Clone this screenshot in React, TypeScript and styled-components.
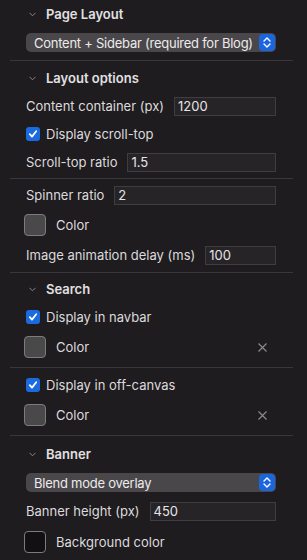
import React from 'react';
import styled, { createGlobalStyle } from 'styled-components';

const GlobalStyle = createGlobalStyle`
  html, body {
    margin: 0;
    padding: 0;
    background: #1f1c1f;
  }
  body {
    font-family: Inter, "Noto Sans", "Liberation Sans", sans-serif;
    font-size: 13px;
    color: #dcdadc;
    -webkit-font-smoothing: antialiased;
  }
`;

interface SectionProps {
  $top?: number;
  $bottom?: number;
  $gap?: number;
  $last?: boolean;
}

interface SwatchProps {
  $fill: string;
}

const Panel = styled.div`
  width: 307px;
  height: 560px;
  overflow: hidden;
  padding-top: 4px;
  box-sizing: border-box;
`;

const Section = styled.section<SectionProps>`
  margin: 0 14px 0 10px;
  padding: ${({ $top = 6 }) => $top}px 17px ${({ $bottom = 7 }) => $bottom}px 16px;
  display: flex;
  flex-direction: column;
  gap: ${({ $gap = 8 }) => $gap}px;
  border-bottom: ${({ $last }) => ($last ? 'none' : '1px solid #3a373a')};
`;

const Header = styled.div`
  height: 20px;
  display: flex;
  align-items: center;
  gap: 10px;
  font-weight: 600;
  color: #e2e0e2;
  padding-left: 3px;
`;

const Chevron = styled.svg`
  width: 7px;
  height: 5px;
  flex-shrink: 0;
`;

const Row = styled.div`
  height: 20px;
  display: flex;
  align-items: center;
  gap: 10px;
`;

const SwatchRow = styled.div`
  height: 24px;
  display: flex;
  align-items: center;
  margin-left: -2px;
`;

const Label = styled.span`
  white-space: nowrap;
`;

const Input = styled.div`
  flex: 1;
  height: 19px;
  box-sizing: border-box;
  border: 1px solid #403d40;
  background: #272427;
  padding: 0 3px;
  display: flex;
  align-items: center;
  color: #e6e4e6;
`;

const Select = styled.div`
  height: 19px;
  border-radius: 5px;
  background: #4a474a;
  display: flex;
  align-items: center;
  justify-content: space-between;
  padding: 0 1px 0 8px;
  color: #ecebec;
  white-space: nowrap;
  letter-spacing: -0.25px;
`;

const SelectButton = styled.span`
  width: 16px;
  height: 17px;
  border-radius: 4px;
  background: #1b66dc;
  display: flex;
  align-items: center;
  justify-content: center;
  flex-shrink: 0;
`;

const Checkbox = styled.span`
  width: 14px;
  height: 14px;
  border-radius: 3px;
  background: #1a6ae0;
  display: flex;
  align-items: center;
  justify-content: center;
  flex-shrink: 0;
`;

const CheckRow = styled(Row)`
  gap: 6px;
`;

const Swatch = styled.span<SwatchProps>`
  width: 22px;
  height: 22px;
  box-sizing: border-box;
  border-radius: 4px;
  border: 1px solid #7d7b7d;
  background: ${({ $fill }) => $fill};
  flex-shrink: 0;
  margin-right: 10px;
`;

const Clear = styled.svg`
  margin-left: auto;
  margin-right: 9px;
  width: 9px;
  height: 9px;
`;

const HeaderTitle = ({ title }: { title: string }) => (
  <Header>
    <Chevron viewBox="0 0 7 5">
      <path d="M0.5 0.8 L3.5 3.8 L6.5 0.8" fill="none" stroke="#8a878a" strokeWidth="1" />
    </Chevron>
    {title}
  </Header>
);

const SelectBox = ({ value }: { value: string }) => (
  <Select>
    <span>{value}</span>
    <SelectButton>
      <svg width="8" height="13" viewBox="0 0 8 13">
        <path d="M1 5 L4 2 L7 5 M1 8 L4 11 L7 8" fill="none" stroke="#fff" strokeWidth="1.4" strokeLinecap="round" strokeLinejoin="round" />
      </svg>
    </SelectButton>
  </Select>
);

const Check = ({ label }: { label: string }) => (
  <CheckRow>
    <Checkbox>
      <svg width="10" height="10" viewBox="0 0 10 10">
        <path d="M1.8 5.2 L4 7.6 L8.2 2.2" fill="none" stroke="#fff" strokeWidth="1.8" strokeLinecap="round" strokeLinejoin="round" />
      </svg>
    </Checkbox>
    <Label>{label}</Label>
  </CheckRow>
);

const Field = ({ label, value }: { label: string; value: string }) => (
  <Row>
    <Label>{label}</Label>
    <Input>{value}</Input>
  </Row>
);

const ColorPick = ({ label, fill, clearable }: { label: string; fill: string; clearable?: boolean }) => (
  <SwatchRow>
    <Swatch $fill={fill} />
    <Label>{label}</Label>
    {clearable && (
      <Clear viewBox="0 0 9 9">
        <path d="M0.5 0.5 L8.5 8.5 M8.5 0.5 L0.5 8.5" stroke="#8e8c8e" strokeWidth="1.1" />
      </Clear>
    )}
  </SwatchRow>
);

export default function App() {
  return (
    <>
      <GlobalStyle />
      <Panel>
        <Section $top={0} $bottom={8} $gap={9}>
          <HeaderTitle title="Page Layout" />
          <SelectBox value="Content + Sidebar (required for Blog)" />
        </Section>
        <Section $top={7} $bottom={6}>
          <HeaderTitle title="Layout options" />
          <Field label="Content container (px)" value="1200" />
          <Check label="Display scroll-top" />
          <Field label="Scroll-top ratio" value="1.5" />
        </Section>
        <Section>
          <Field label="Spinner ratio" value="2" />
          <ColorPick label="Color" fill="#4a494a" />
          <Field label="Image animation delay (ms)" value="100" />
        </Section>
        <Section $bottom={8}>
          <HeaderTitle title="Search" />
          <Check label="Display in navbar" />
          <ColorPick label="Color" fill="#4a494a" clearable />
        </Section>
        <Section $top={7} $bottom={8}>
          <Check label="Display in off-canvas" />
          <ColorPick label="Color" fill="#4a494a" clearable />
        </Section>
        <Section $top={8} $gap={9} $last>
          <HeaderTitle title="Banner" />
          <SelectBox value="Blend mode overlay" />
          <Field label="Banner height (px)" value="450" />
          <ColorPick label="Background color" fill="#121012" />
        </Section>
      </Panel>
    </>
  );
}
